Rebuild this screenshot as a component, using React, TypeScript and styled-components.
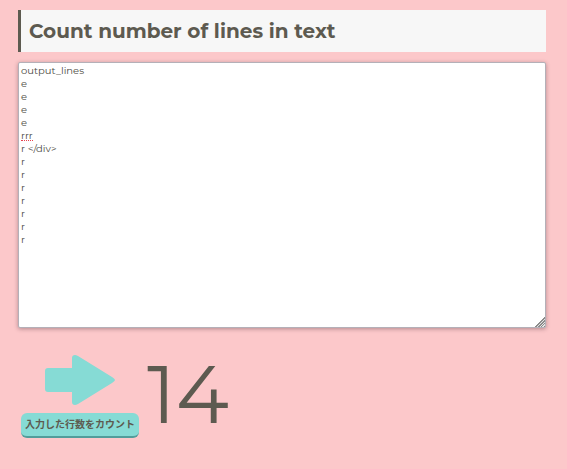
import React, { useState } from "react";
import styled, { createGlobalStyle } from "styled-components";

const INK = "#5d5a50";
const MINT = "#86dbd5";

const GlobalStyle = createGlobalStyle`
  * { box-sizing: border-box; }
  body {
    margin: 0;
    background: #fcc8ca;
    color: ${INK};
    font-family: Montserrat, Inter, "Noto Sans CJK JP", sans-serif;
  }
`;

const Page = styled.main`
  padding: 10px 21px 24px 18px;
`;

const Title = styled.h1`
  margin: 0 0 10px;
  padding: 6px 8px;
  border-left: 3px solid ${INK};
  background: #f7f7f7;
  font-size: 20px;
  line-height: 30px;
  font-weight: 700;
`;

const Editor = styled.div`
  position: relative;
`;

const TextInput = styled.textarea`
  display: block;
  width: 100%;
  height: 266px;
  padding: 1px 2px;
  border: 1px solid #b4b0b8;
  border-radius: 2px;
  outline: none;
  background: #fff;
  color: #4c4a44;
  box-shadow: 0 1px 4px rgba(70, 40, 50, 0.4);
  font-family: inherit;
  font-size: 10px;
  line-height: 13px;
  resize: vertical;

  &::-webkit-resizer {
    background:
      linear-gradient(135deg, #fff 65%, transparent 65%),
      repeating-linear-gradient(135deg, #8c8c8c 0 1px, #e4e4e4 1px 2px);
  }
`;

const SpellingMark = styled.span`
  position: absolute;
  top: 78px;
  left: 3px;
  width: 12px;
  border-bottom: 1px dotted #e8434f;
  pointer-events: none;
`;

const Result = styled.section`
  display: flex;
  align-items: flex-start;
  gap: 8px;
  padding: 27px 3px 0;
`;

const Action = styled.div`
  display: flex;
  flex-direction: column;
  align-items: center;
  gap: 8px;
`;

const Arrow = styled.svg`
  display: block;
  width: 70px;
  height: 50px;
  fill: ${MINT};
`;

const CountButton = styled.button`
  height: 25px;
  padding: 0 4px 2px;
  border: 0;
  border-bottom: 2px solid #519d9b;
  border-radius: 6px;
  background: ${MINT};
  color: ${INK};
  font-family: "Noto Sans CJK JP", sans-serif;
  font-size: 10px;
  line-height: 20px;
  font-weight: 700;
  white-space: nowrap;
  cursor: pointer;
`;

const Count = styled.output`
  font-size: 80px;
  line-height: 80px;
  font-weight: 400;
`;

const INITIAL_TEXT = [
  "output_lines", "e", "e", "e", "e", "rrr", "r </div>",
  "r", "r", "r", "r", "r", "r", "r",
].join("\n");

export default function App() {
  const [text, setText] = useState(INITIAL_TEXT);
  const [count, setCount] = useState(14);

  return (
    <>
      <GlobalStyle />
      <Page>
        <Title>Count number of lines in text</Title>
        <Editor>
          <TextInput
            id="source"
            aria-label="Text"
            spellCheck={false}
            value={text}
            onChange={(e) => setText(e.target.value)}
          />
          {text === INITIAL_TEXT && <SpellingMark />}
        </Editor>
        <Result>
          <Action>
            <Arrow viewBox="0 0 70 50" aria-hidden="true">
              <path d="M3 13H27V3Q27 0 30 0Q31 0 33 1L67 22Q70 24 70 25Q70 26 67 28L33 49Q31 50 30 50Q27 50 27 47V37H3Q0 37 0 34V16Q0 13 3 13Z" />
            </Arrow>
            <CountButton type="button" onClick={() => setCount(text.split("\n").length)}>
              入力した行数をカウント
            </CountButton>
          </Action>
          <Count htmlFor="source">{count}</Count>
        </Result>
      </Page>
    </>
  );
}
